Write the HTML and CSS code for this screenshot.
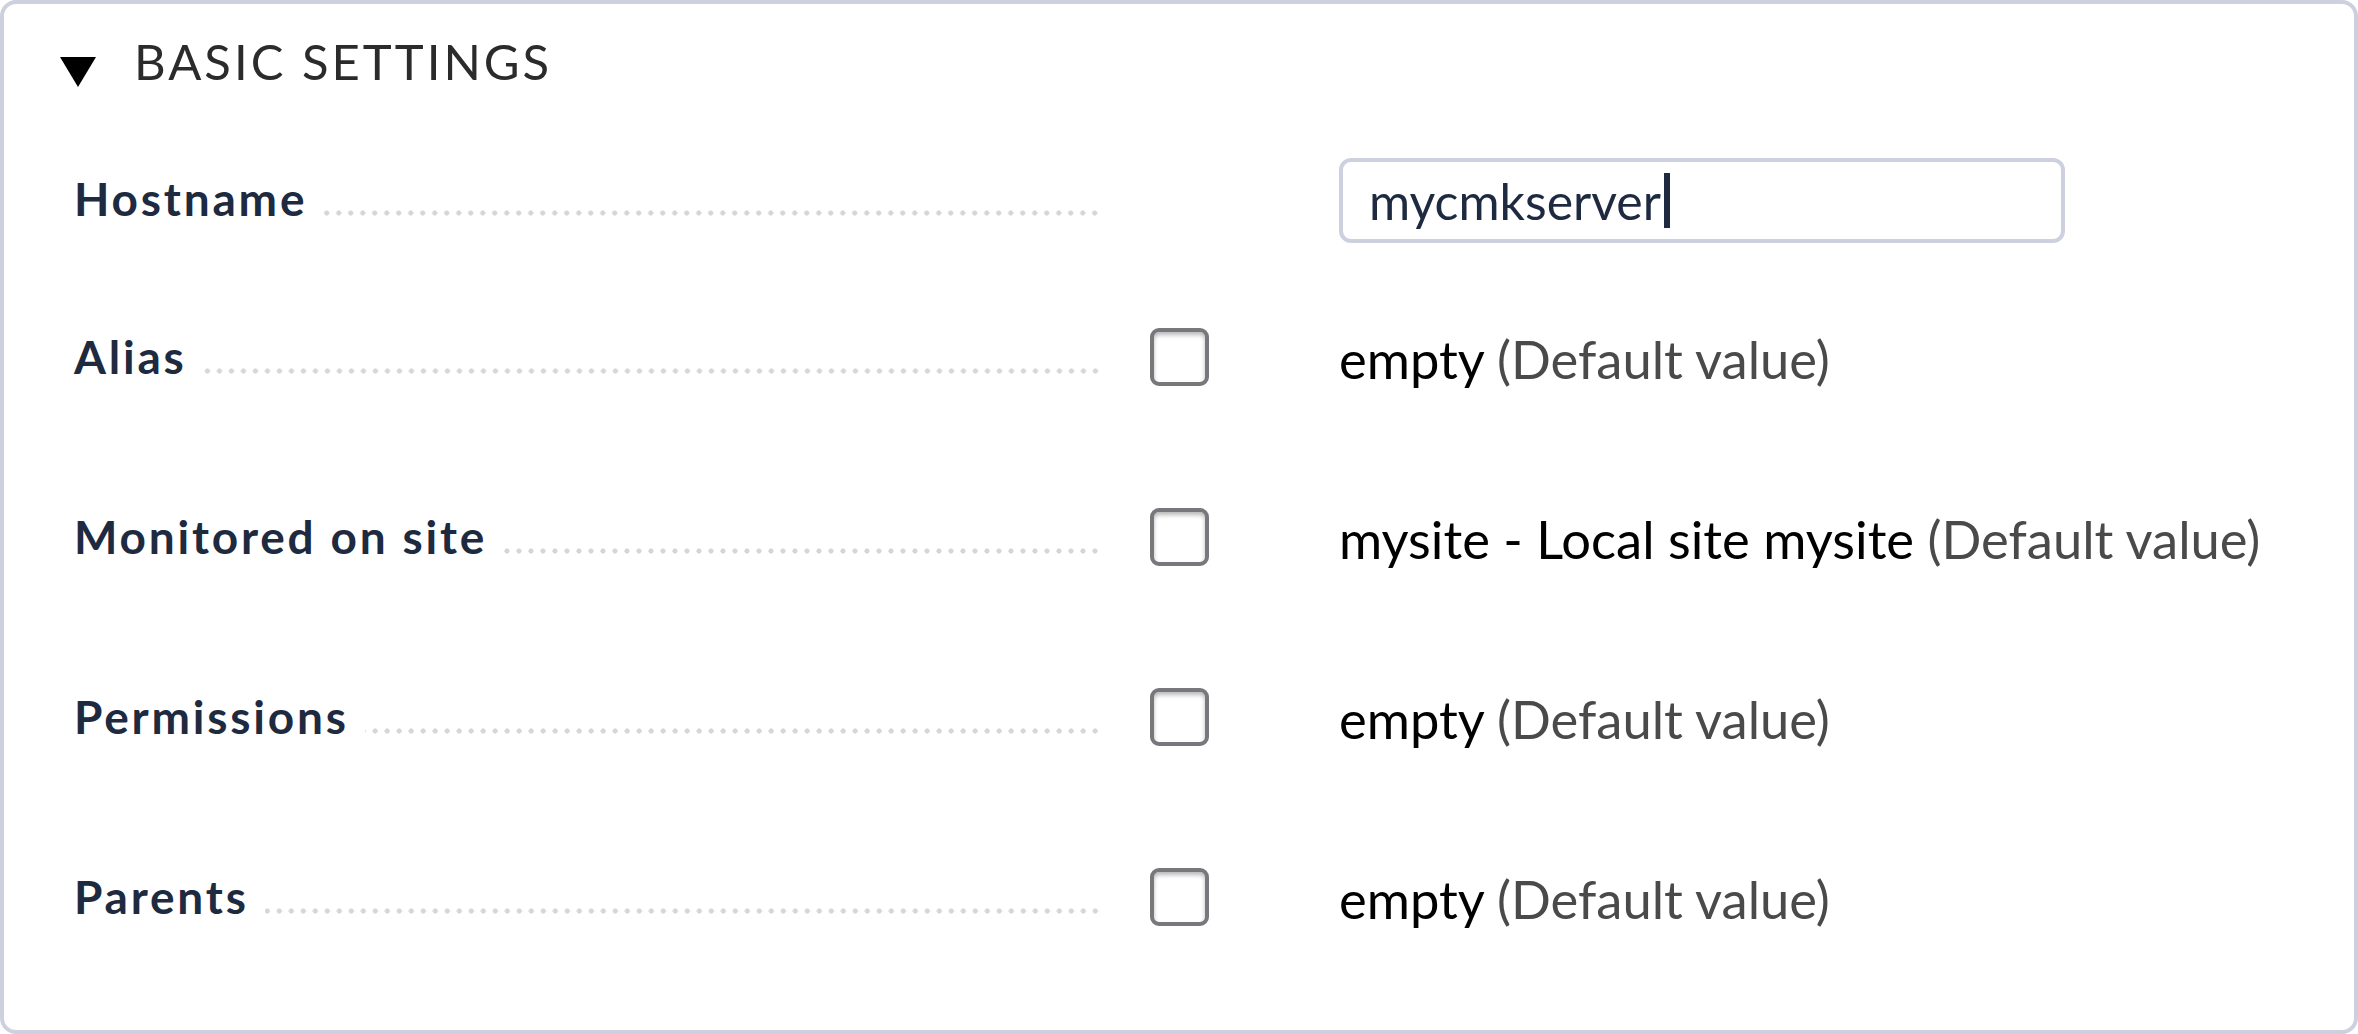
FILE: index.html
```html
<!DOCTYPE html>
<html lang="en">
<head>
<meta charset="utf-8">
<title>Basic settings</title>
<link rel="stylesheet" href="styles.css">
</head>
<body>
<div class="frame">
  <div class="header">
    <span class="triangle"></span>
    <span class="title">BASIC SETTINGS</span>
  </div>
  <div class="rows">
    <div class="row row--input">
      <div class="label-cell"><span class="label">Hostname</span><span class="dots"></span></div>
      <div class="check-cell"></div>
      <div class="value-cell">
        <div class="input"><span class="input-text">mycmkserver</span><span class="caret"></span></div>
      </div>
    </div>
    <div class="row">
      <div class="label-cell"><span class="label">Alias</span><span class="dots"></span></div>
      <div class="check-cell"><span class="checkbox"></span></div>
      <div class="value-cell"><span class="value">empty <span class="default">(Default value)</span></span></div>
    </div>
    <div class="row">
      <div class="label-cell"><span class="label">Monitored on site</span><span class="dots"></span></div>
      <div class="check-cell"><span class="checkbox"></span></div>
      <div class="value-cell"><span class="value">mysite - Local site mysite <span class="default">(Default value)</span></span></div>
    </div>
    <div class="row">
      <div class="label-cell"><span class="label">Permissions</span><span class="dots"></span></div>
      <div class="check-cell"><span class="checkbox"></span></div>
      <div class="value-cell"><span class="value">empty <span class="default">(Default value)</span></span></div>
    </div>
    <div class="row">
      <div class="label-cell"><span class="label">Parents</span><span class="dots"></span></div>
      <div class="check-cell"><span class="checkbox"></span></div>
      <div class="value-cell"><span class="value">empty <span class="default">(Default value)</span></span></div>
    </div>
  </div>
</div>
</body>
</html>
```
FILE: styles.css
```css
html, body {
  margin: 0;
  padding: 0;
  background: #ffffff;
}
body {
  font-family: Lato, "Noto Sans", sans-serif;
}
.frame {
  box-sizing: border-box;
  width: 2358px;
  height: 1034px;
  border: 4px solid #cdd0de;
  border-radius: 16px;
  padding: 0 0 0 56px;
}
.header {
  display: flex;
  align-items: flex-start;
  padding-top: 33px;
  height: 49px;
}
.triangle {
  width: 0;
  height: 0;
  border-left: 18px solid transparent;
  border-right: 18px solid transparent;
  border-top: 30px solid #000;
  margin-top: 20px;
}
.title {
  margin-left: 38px;
  font-size: 49px;
  font-weight: 400;
  letter-spacing: 3px;
  color: #2b2b2b;
  line-height: 1;
}
.rows {
  display: flex;
  flex-direction: column;
  margin-top: 72px;
}
.row {
  display: flex;
  align-items: center;
  height: 60px;
}
.row + .row {
  margin-top: 120px;
}
.row--input {
  height: 85px;
  margin-bottom: -36px;
}
.label-cell {
  display: flex;
  align-items: baseline;
  width: 1027px;
  margin-left: 14px;
}
.row--input .label-cell {
  margin-bottom: 4px;
}
.label {
  font-size: 46px;
  font-weight: 700;
  letter-spacing: 2.8px;
  color: #1e2a40;
  white-space: nowrap;
  line-height: 1;
}
.dots {
  flex: 1;
  height: 6px;
  margin-left: 16px;
  background-image: radial-gradient(circle, #d6d6d6 2.3px, transparent 2.9px);
  background-size: 12px 6px;
  background-position: right bottom;
  background-repeat: repeat-x;
}
.check-cell {
  width: 59px;
  margin-left: 49px;
  display: flex;
  align-items: center;
}
.checkbox {
  box-sizing: border-box;
  width: 59px;
  height: 58px;
  border: 4px solid #76787c;
  border-radius: 9px;
  background: #fff;
  box-shadow: inset 0 3px 4px rgba(0, 0, 0, 0.28);
}
.value-cell {
  margin-left: 130px;
  display: flex;
  align-items: center;
}
.value {
  font-size: 52.5px;
  color: #000;
  white-space: nowrap;
  line-height: 1;
  margin-top: 5px;
}
.default {
  color: #4a4a4a;
}
.input {
  box-sizing: border-box;
  width: 726px;
  height: 85px;
  border: 4px solid #cdd0de;
  border-radius: 12px;
  display: flex;
  align-items: center;
  padding-left: 26px;
}
.input-text {
  font-size: 50px;
  color: #1e2a40;
  line-height: 1;
}
.caret {
  display: inline-block;
  width: 6px;
  height: 55px;
  background: #1e2a40;
  margin-left: 3px;
}
```
